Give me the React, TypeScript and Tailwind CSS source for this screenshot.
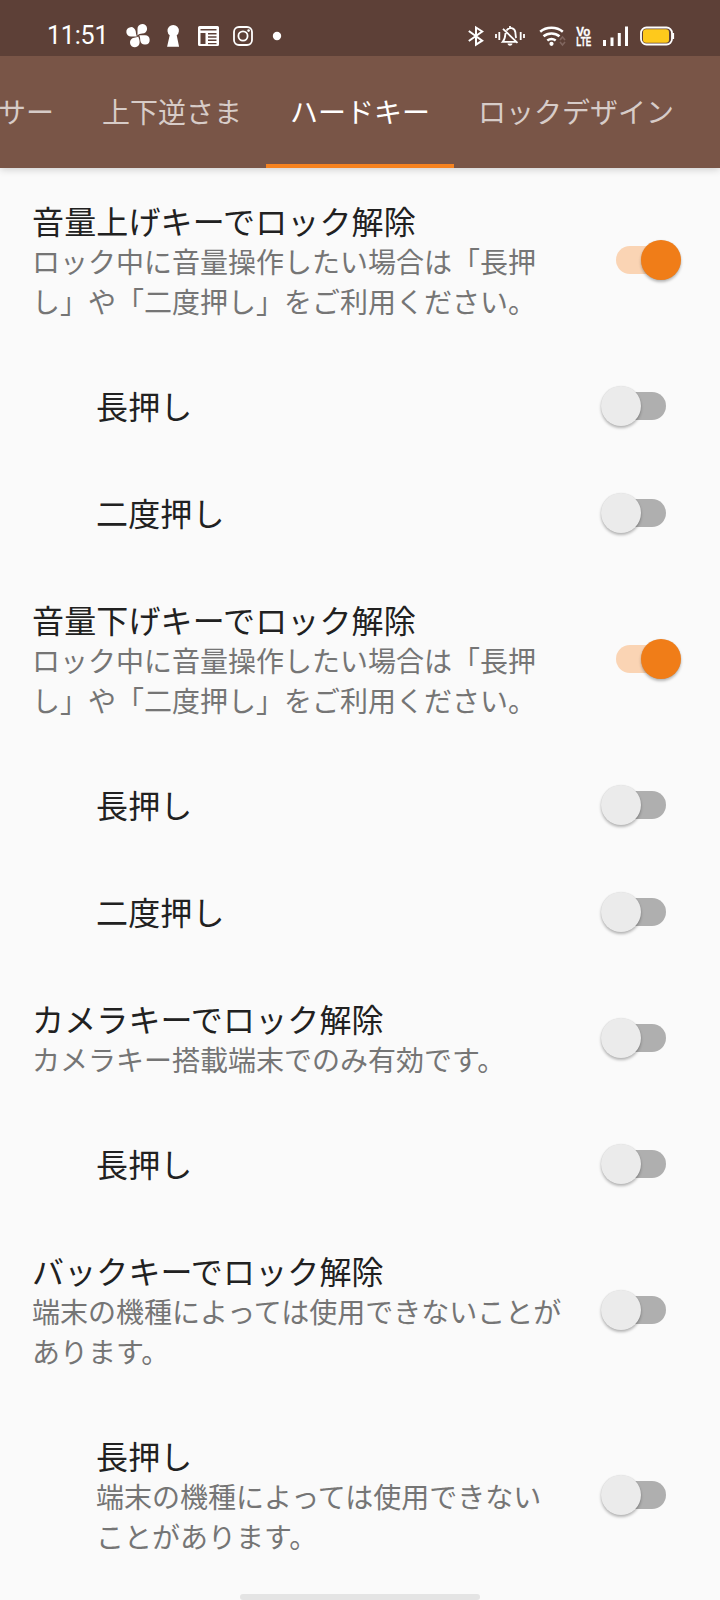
import React from "react";

type Item = { title: string; desc?: string; on?: boolean; sub?: boolean; height: string };

const TWO_LINE = "h-[185px]";
const ONE_LINE = "h-[145px]";
const PLAIN = "h-[107px]";

const volumeNote = "ロック中に音量操作したい場合は「長押\nし」や「二度押し」をご利用ください。";

const items: Item[] = [
  { title: "音量上げキーでロック解除", desc: volumeNote, on: true, height: TWO_LINE },
  { title: "長押し", sub: true, height: PLAIN },
  { title: "二度押し", sub: true, height: PLAIN },
  { title: "音量下げキーでロック解除", desc: volumeNote, on: true, height: TWO_LINE },
  { title: "長押し", sub: true, height: PLAIN },
  { title: "二度押し", sub: true, height: PLAIN },
  { title: "カメラキーでロック解除", desc: "カメラキー搭載端末でのみ有効です。", height: ONE_LINE },
  { title: "長押し", sub: true, height: PLAIN },
  { title: "バックキーでロック解除", desc: "端末の機種によっては使用できないことが\nあります。", height: TWO_LINE },
  { title: "長押し", desc: "端末の機種によっては使用できない\nことがあります。", sub: true, height: TWO_LINE },
];

function Switch({ on }: { on?: boolean }) {
  return (
    <button
      role="switch"
      aria-checked={!!on}
      className="relative h-10 w-[82px] shrink-0"
    >
      <span
        className={`absolute top-[6px] left-4 h-7 w-[50px] rounded-full ${on ? "bg-[#fad4b4]" : "bg-[#afafaf]"}`}
      />
      <span
        className={`absolute top-0 size-10 rounded-full shadow-[0_2px_3px_rgba(0,0,0,0.28),0_0_1px_rgba(0,0,0,0.12)] ${
          on ? "left-[41px] bg-[#f07d18]" : "left-[1px] bg-[#ebebeb]"
        }`}
      />
    </button>
  );
}

function Row({ item }: { item: Item }) {
  return (
    <div className={`flex items-center pr-[38px] ${item.height} ${item.sub ? "pl-24" : "pl-8"}`}>
      <div className={`flex-1 whitespace-pre ${item.desc ? "pt-[2px]" : ""}`}>
        <div className="text-[32px] leading-[41px] tracking-[0.15px] text-[#212121]">{item.title}</div>
        {item.desc && <div className="text-[28px] leading-10 text-[#757575]">{item.desc}</div>}
      </div>
      <Switch on={item.on} />
    </div>
  );
}

function LeftIcons() {
  return (
    <svg width="160" height="28" viewBox="124 22 160 28" fill="#fff">
      {/* pinwheel */}
      <path d="M137.500 35.500V29a4.800 4.800 0 1 1 4.800 4.600c-2 0-3.400.7-4.800 1.900z" />
      <path d="M136.800 36.500h-5.400a4.700 4.700 0 1 1 4.300-5.200c.2 2 .5 3.600 1.100 5.200z" />
      <path d="M138.200 36.500c.6 1.400 1.500 3.700 1.400 6a4.800 4.800 0 1 1-5.500-4.700c1.800-.3 2.900-.6 4.100-1.300z" />
      <path d="M139.300 35.200h5.700a4.700 4.700 0 1 1-4.700 5.300c-.1-2-.3-3.500-1-5.300z" />
      {/* keyhole */}
      <path d="M169.700 35.200a5.700 5.700 0 1 1 7 0l2.400 11.600h-12z" />
      {/* news page */}
      <path
        fillRule="evenodd"
        d="M199.500 26h18a1.500 1.500 0 0 1 1.500 1.500v17a1.500 1.500 0 0 1-1.500 1.500h-18a1.500 1.500 0 0 1-1.500-1.500v-17a1.500 1.500 0 0 1 1.500-1.500zM200.500 29v1.500h16V29zM200.500 33v11h5V33zM208 33v1.500h8.500V33zM208 36.300v1.400h8.500v-1.400zM208 39.600v1.400h8.500v-1.400zM208 42.900v1.300h8.500v-1.300z"
      />
      {/* camera */}
      <rect x="234" y="27" width="18" height="18" rx="5" fill="none" stroke="#fff" strokeWidth="1.800" />
      <circle cx="243" cy="36" r="4.600" fill="none" stroke="#fff" strokeWidth="1.800" />
      <circle cx="248.600" cy="30.600" r="1.300" />
      <circle cx="277" cy="36" r="4.200" />
    </svg>
  );
}

function RightIcons() {
  return (
    <svg width="210" height="28" viewBox="466 22 210 28" fill="none" stroke="#fff" strokeWidth="2">
      {/* bluetooth */}
      <path d="M468.800 31l13.400 9.700-6.200 4V27.500l6.200 4L468.800 41" />
      {/* muted bell */}
      <path
        d="M505.500 33c-.3 3.500-.3 6-2.800 8.800h13M506.500 30.500c2.700-4 8-2.800 8.800 1.500.4 2.500.2 4.500.9 6M503 28.800l14.500 14M510 26v2.500"
        strokeWidth="1.800"
      />
      <path d="M507.500 43.600h5c-.5 3-4.500 3-5 0z" fill="#fff" stroke="none" />
      <path d="M496 34v4M499.300 32v8M520.700 32v8M524 34v4" strokeWidth="1.800" />
      {/* wifi */}
      <path
        d="M540.200 31.800c6-5.300 16.600-5.300 22.600 0M543.500 36.300c4.500-3.900 11.500-3.900 16 0M547.300 40.600c2.500-2 5.900-2 8.400 0"
        strokeWidth="2.500"
      />
      <circle cx="551.500" cy="43.800" r="2.100" fill="#fff" stroke="none" />
      <path d="M560 40l2.500-3 2.500 3M560 42l2.500 3 2.500-3" stroke="#80665f" strokeWidth="1.600" />
      {/* VoLTE */}
      <g fill="#fff" stroke="#fff" strokeWidth="0.300" fontFamily="'Liberation Sans', sans-serif" fontWeight="700">
        <text x="576.300" y="35.800" fontSize="12.500" textLength="14" lengthAdjust="spacingAndGlyphs">Vo</text>
        <text x="576.300" y="46" fontSize="12.500" textLength="15" lengthAdjust="spacingAndGlyphs">LTE</text>
      </g>
      {/* signal bars */}
      <path d="M604.500 40v6M612 37.500V46M619.300 33v13M626.500 26.500V46" strokeWidth="3" />
      {/* battery */}
      <rect x="641" y="27.500" width="31" height="17" rx="5.500" strokeWidth="1.800" />
      <rect x="643" y="29.300" width="26" height="13.400" rx="3" fill="#fec91c" stroke="none" />
      <path d="M673.200 33v6" strokeWidth="1.800" />
    </svg>
  );
}

const tabs = [
  { label: "センサー" },
  { label: "上下逆さま" },
  { label: "ハードキー", active: true },
  { label: "ロックデザイン" },
];

export default function App() {
  return (
    <div className="flex h-[1600px] w-[720px] flex-col overflow-hidden bg-[#fafafa] font-['Noto_Sans_CJK_JP',sans-serif]">
      <header className="z-10 shrink-0 bg-[#795547] shadow-[0_1px_8px_rgba(0,0,0,0.2)]">
        <div className="flex h-14 items-end bg-[#5d4037] pb-[6px] pl-[47px]">
          <span className="w-[77px] font-['Roboto',sans-serif] text-[25px] leading-7 tracking-[-0.2px] text-white">11:51</span>
          <LeftIcons />
          <div className="ml-auto pr-11">
            <RightIcons />
          </div>
        </div>
        <nav className="-ml-[82px] flex h-28">
          {tabs.map((t) => (
            <div
              key={t.label}
              className={`flex shrink-0 items-center border-b-4 px-6 pt-[2px] text-[28px] whitespace-nowrap ${
                t.active ? "border-[#f58220] text-white" : "border-transparent text-[#d7ccc8]"
              }`}
            >
              {t.label}
            </div>
          ))}
        </nav>
      </header>
      <main className="-mt-px shrink-0">
        {items.map((item, i) => (
          <Row key={i} item={item} />
        ))}
      </main>
      <div className="mt-[7px] flex justify-center">
        <div className="h-[6px] w-60 rounded-full bg-[#e4e4e4]" />
      </div>
    </div>
  );
}
